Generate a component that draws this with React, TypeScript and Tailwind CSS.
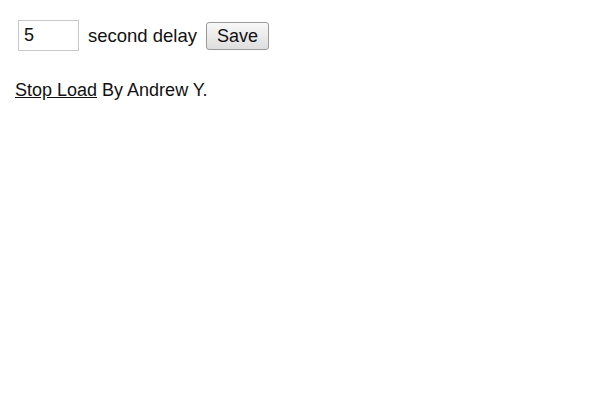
export default function App() {
  return (
    <div className="min-h-[412px] bg-white px-[15px] pt-[20px] text-[18px] text-[#111] [font-family:'Liberation_Sans',Arial,sans-serif]">
      <div className="flex items-center">
        <input
          defaultValue="5"
          className="ml-[3px] h-[31px] w-[61px] border border-[#c8c8c8] px-[5px] text-[18px] outline-none"
        />
        <span className="ml-[9px] text-[18.5px]">second delay</span>
        <button className="ml-[9px] h-[28px] w-[63px] rounded-[3px] border border-[#9a9a9a] bg-gradient-to-b from-[#f8f8f8] to-[#dedede] text-[18px]">
          Save
        </button>
      </div>
      <p className="mt-[28px] leading-[22px]">
        <a href="#" className="underline">Stop Load</a> By Andrew Y.
      </p>
    </div>
  );
}
